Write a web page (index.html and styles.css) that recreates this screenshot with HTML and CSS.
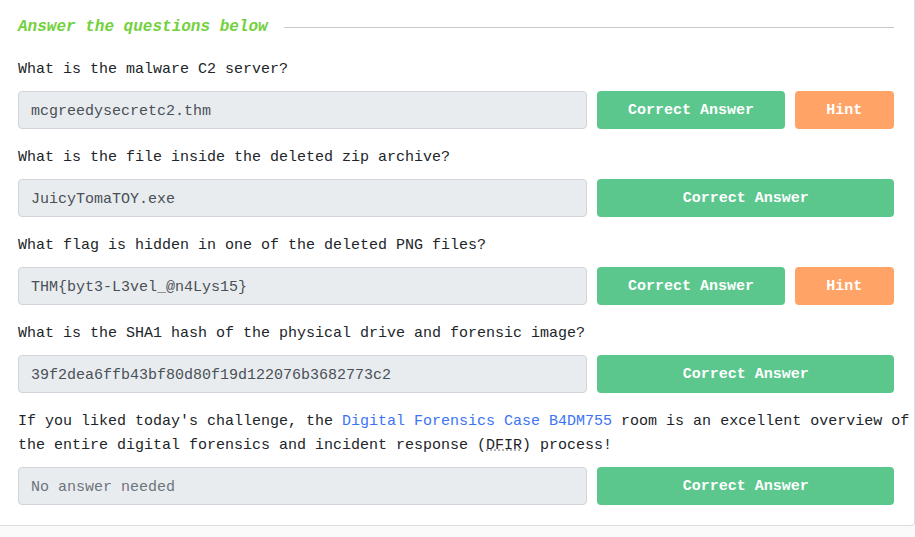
FILE: index.html
```html
<!DOCTYPE html>
<html lang="en">
<head>
<meta charset="utf-8">
<meta name="viewport" content="width=device-width, initial-scale=1">
<title>Task questions</title>
<link rel="stylesheet" href="styles.css">
</head>
<body>
<main class="card">
  <h2 class="heading">Answer the questions below</h2>

  <section class="question">
    <label class="prompt" for="q1">What is the malware C2 server?</label>
    <div class="row">
      <input class="answer" id="q1" type="text" value="mcgreedysecretc2.thm" readonly>
      <div class="actions">
        <button class="btn btn-correct" type="button">Correct Answer</button>
        <button class="btn btn-hint" type="button">Hint</button>
      </div>
    </div>
  </section>

  <section class="question">
    <label class="prompt" for="q2">What is the file inside the deleted zip archive?</label>
    <div class="row">
      <input class="answer" id="q2" type="text" value="JuicyTomaTOY.exe" readonly>
      <div class="actions">
        <button class="btn btn-correct" type="button">Correct Answer</button>
      </div>
    </div>
  </section>

  <section class="question">
    <label class="prompt" for="q3">What flag is hidden in one of the deleted PNG files?</label>
    <div class="row">
      <input class="answer" id="q3" type="text" value="THM{byt3-L3vel_@n4Lys15}" readonly>
      <div class="actions">
        <button class="btn btn-correct" type="button">Correct Answer</button>
        <button class="btn btn-hint" type="button">Hint</button>
      </div>
    </div>
  </section>

  <section class="question">
    <label class="prompt" for="q4">What is the SHA1 hash of the physical drive and forensic image?</label>
    <div class="row">
      <input class="answer" id="q4" type="text" value="39f2dea6ffb43bf80d80f19d122076b3682773c2" readonly>
      <div class="actions">
        <button class="btn btn-correct" type="button">Correct Answer</button>
      </div>
    </div>
  </section>

  <section class="question">
    <label class="prompt prompt-wide" for="q5">If you liked today's challenge, the <a href="#room">Digital Forensics Case B4DM755</a> room is an excellent overview of the entire digital forensics and incident response (<abbr>DFIR</abbr>) process!</label>
    <div class="row">
      <input class="answer" id="q5" type="text" placeholder="No answer needed" readonly>
      <div class="actions">
        <button class="btn btn-correct" type="button">Correct Answer</button>
      </div>
    </div>
  </section>
</main>
</body>
</html>
```

FILE: styles.css
```css
* {
  box-sizing: border-box;
}

body {
  margin: 0;
  background: #fafafa;
  color: #212529;
  font-family: "Liberation Mono", monospace;
  font-size: 15px;
  line-height: 24px;
}

.card {
  display: flex;
  flex-direction: column;
  gap: 17px;
  padding: 14px 20px 20px 18px;
  background: #fff;
  border: solid #dcdddf;
  border-width: 0 1px 1px 0;
  border-radius: 0 0 4px 0;
}

.heading {
  display: flex;
  align-items: center;
  gap: 16px;
  margin: 0;
  color: #72d13d;
  font-size: 16px;
  font-style: italic;
  line-height: 27px;
}

.heading::after {
  content: "";
  flex: 1;
  height: 1px;
  background: #c8c8c8;
}

.question {
  display: flex;
  flex-direction: column;
  gap: 9px;
}

/* Long prompts run into the card's right gutter. */
.prompt-wide {
  margin-right: -18px;
}

.prompt a {
  color: #3c74f5;
  text-decoration: none;
}

.prompt abbr {
  text-decoration: underline dotted #9a9a9a;
}

.row {
  display: grid;
  grid-template-columns: 65% 1fr;
  gap: 10px;
}

.answer {
  width: 100%;
  min-width: 0;
  height: 38px;
  padding: 2px 12px 0;
  border: 1px solid #ced4da;
  border-radius: 4px;
  background: #e9ecef;
  color: #495057;
  font: inherit;
}

.answer::placeholder {
  color: #6c757d;
  opacity: 1;
}

.actions {
  display: flex;
  gap: 10px;
}

.btn {
  flex: 1 1 auto;
  height: 38px;
  padding: 2px 30px 0;
  border: 0;
  border-radius: 4px;
  color: #fff;
  font: inherit;
  font-weight: bold;
  white-space: nowrap;
}

.btn-correct {
  background: #5bc78d;
}

.btn-hint {
  padding: 2px 31px 0;
  background: #ffa466;
}
```
